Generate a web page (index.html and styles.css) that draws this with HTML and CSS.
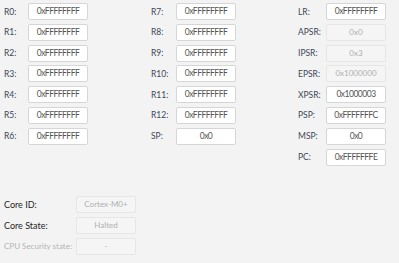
FILE: index.html
```html
<!DOCTYPE html>
<html lang="en">
<head>
  <meta charset="UTF-8">
  <meta name="viewport" content="width=device-width, initial-scale=1.0">
  <title>Core Registers</title>
  <link rel="stylesheet" href="styles.css">
</head>
<body>
  <div class="regs">
    <div class="col col-a">
      <div class="row"><span class="lbl">R0:</span><span class="box">0xFFFFFFFF</span></div>
      <div class="row"><span class="lbl">R1:</span><span class="box">0xFFFFFFFF</span></div>
      <div class="row"><span class="lbl">R2:</span><span class="box">0xFFFFFFFF</span></div>
      <div class="row"><span class="lbl">R3:</span><span class="box">0xFFFFFFFF</span></div>
      <div class="row"><span class="lbl">R4:</span><span class="box">0xFFFFFFFF</span></div>
      <div class="row"><span class="lbl">R5:</span><span class="box">0xFFFFFFFF</span></div>
      <div class="row"><span class="lbl">R6:</span><span class="box">0xFFFFFFFF</span></div>
    </div>
    <div class="col col-b">
      <div class="row"><span class="lbl">R7:</span><span class="box">0xFFFFFFFF</span></div>
      <div class="row"><span class="lbl">R8:</span><span class="box">0xFFFFFFFF</span></div>
      <div class="row"><span class="lbl">R9:</span><span class="box">0xFFFFFFFF</span></div>
      <div class="row"><span class="lbl">R10:</span><span class="box">0xFFFFFFFF</span></div>
      <div class="row"><span class="lbl">R11:</span><span class="box">0xFFFFFFFF</span></div>
      <div class="row"><span class="lbl">R12:</span><span class="box">0xFFFFFFFF</span></div>
      <div class="row"><span class="lbl">SP:</span><span class="box">0x0</span></div>
    </div>
    <div class="col col-c">
      <div class="row"><span class="lbl">LR:</span><span class="box">0xFFFFFFFF</span></div>
      <div class="row"><span class="lbl">APSR:</span><span class="box off">0x0</span></div>
      <div class="row"><span class="lbl">IPSR:</span><span class="box off">0x3</span></div>
      <div class="row"><span class="lbl">EPSR:</span><span class="box off">0x1000000</span></div>
      <div class="row"><span class="lbl">XPSR:</span><span class="box">0x1000003</span></div>
      <div class="row"><span class="lbl">PSP:</span><span class="box">0xFFFFFFFC</span></div>
      <div class="row"><span class="lbl">MSP:</span><span class="box">0x0</span></div>
      <div class="row"><span class="lbl">PC:</span><span class="box">0xFFFFFFFE</span></div>
    </div>
  </div>

  <div class="core">
    <div class="row"><span class="lbl">Core ID:</span><span class="box off">Cortex-M0+</span></div>
    <div class="row"><span class="lbl">Core State:</span><span class="box off">Halted</span></div>
    <div class="row"><span class="lbl dim">CPU Security state:</span><span class="box off">-</span></div>
  </div>
</body>
</html>
```

FILE: styles.css
```css
body {
  margin: 0;
  background: #f3f3f3;
  font-family: Lato, "Open Sans", sans-serif;
  font-size: 8.5px;
}
.regs {
  display: grid;
  grid-template-columns: 147px 147px 101px;
  padding: 3px 0 0 4px;
}
.col {
  display: flex;
  flex-direction: column;
  gap: 3.8px;
}
.row {
  display: flex;
  align-items: center;
}
.lbl {
  color: #3b4657;
  white-space: nowrap;
}
.col-a .lbl { width: 24px; }
.col-b .lbl { width: 25px; }
.col-c .lbl { width: 28px; }
.box {
  box-sizing: border-box;
  width: 60px;
  height: 17px;
  line-height: 15px;
  text-align: center;
  font-size: 8.5px;
  letter-spacing: -0.5px;
  background: #fff;
  border: 1px solid #d6d6d6;
  border-radius: 2px;
  color: #555;
}
.box.off {
  background: #f5f5f5;
  border-color: #e6e6e6;
  color: #b0b0b0;
  letter-spacing: 0;
  font-size: 8px;
}
.core {
  display: flex;
  flex-direction: column;
  gap: 4px;
  padding: 30px 0 0 4px;
}
.core .lbl {
  width: 72px;
  color: #1e1e1e;
  font-size: 9px;
}
.core .lbl.dim { color: #b3b3b3; font-size: 8px; }
```
